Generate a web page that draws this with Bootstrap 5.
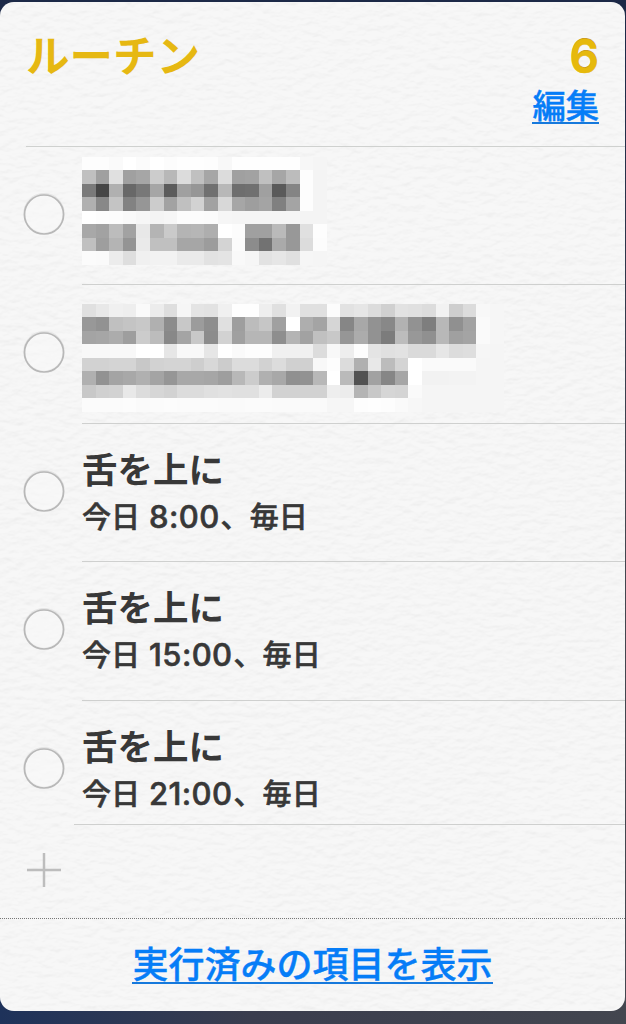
<!DOCTYPE html>
<html lang="ja">
<head>
<meta charset="utf-8">
<meta name="viewport" content="width=device-width, initial-scale=1">
<title>ルーチン</title>
<link href="https://cdn.jsdelivr.net/npm/bootstrap@5.3.0/dist/css/bootstrap.min.css" rel="stylesheet">
<style>
body{height:1024px;overflow:hidden;font-family:Inter,"Noto Sans CJK JP",sans-serif;color:#383838;background:linear-gradient(90deg,#1e325a,#3a3d4e 40%,#43464f)}
.wall{height:1024px;padding:2px 1px 13px 0;background:linear-gradient(#1c2947 0 60px,transparent 500px)}
.paper{height:1009px;border-radius:14px;background:#f6f6f6;isolation:isolate}
.grain{z-index:-1;inset:0}
.head{height:145px;margin-left:26px;padding-right:26px;border-bottom:1px solid #cfd1cf}
.title{font:600 43.5px/60px "Noto Sans CJK JP",sans-serif;color:#e6b812;margin-top:22px}
.count{font-size:46px;font-weight:600;line-height:60px;color:#e6b90c;margin-top:24px;text-shadow:0 -1px 0 #c99a20;-webkit-text-stroke:.5px #e6b90c}
.lnk{color:#067df7;font-weight:500;text-decoration:none;-webkit-text-stroke:.4px #067df7}
.lnk span{display:inline-block;border-bottom:2px solid #1679dc}
.edit{font-size:33.3px;line-height:1;margin-top:2px}
.edit span{height:36px;line-height:37px}
.item{height:138.4px}
.ring{width:82px;flex:none;padding:46px 0 0 23px}
.body-col{border-bottom:1px solid #cfd0cf}
.name{font-size:35.5px;line-height:48px;font-weight:600;padding-top:23px}
.when{font-size:29px;line-height:44px;font-weight:500;-webkit-text-stroke:.6px #383838;padding-top:1px;letter-spacing:.1px}
.when span{font-size:31px;font-weight:500;line-height:1;letter-spacing:.4px;margin:0 1px}
.last{height:124.4px}
.last .body-col{margin-left:-8px;padding-left:8px}
.add{height:94px;padding:27px 0 0 26px;border-bottom:1px dotted #777}
.done{height:92px;padding-top:21px}
.done a{font-size:36px;display:block;line-height:1}
.done span{height:44px;line-height:51px}
</style>
</head>
<body>
<div class="wall">
<main class="paper position-relative overflow-hidden">
<svg class="grain position-absolute w-100 h-100" aria-hidden="true"><filter id="g" x="0" y="0" width="100%" height="100%" color-interpolation-filters="sRGB"><feTurbulence type="fractalNoise" baseFrequency=".08 .15" numOctaves="3" seed="4"/><feDiffuseLighting surfaceScale="1" diffuseConstant="1.12" lighting-color="#fafafa"><feDistantLight azimuth="260" elevation="61"/></feDiffuseLighting></filter><rect width="100%" height="100%" filter="url(#g)" opacity=".13"/></svg>
<header class="head d-flex justify-content-between">
<h1 class="title mb-0">ルーチン</h1>
<div class="text-end"><div class="count">6</div><a class="lnk edit d-block" href="#"><span>編集</span></a></div>
</header>
<section>
<div class="item d-flex"><div class="ring"></div><div class="body-col flex-fill"><svg data-m="0" class="d-block" width="246" height="110" style="margin-top:10px"></svg></div></div>
<div class="item d-flex"><div class="ring"></div><div class="body-col flex-fill"><svg data-m="1" class="d-block" width="422" height="110" style="margin-top:19px"></svg></div></div>
<div class="item d-flex"><div class="ring"></div><div class="body-col flex-fill"><div class="name">舌を上に</div><div class="when">今日 <span>8:00</span>、毎日</div></div></div>
<div class="item d-flex"><div class="ring"></div><div class="body-col flex-fill"><div class="name">舌を上に</div><div class="when">今日 <span>15:00</span>、毎日</div></div></div>
<div class="item last d-flex"><div class="ring"></div><div class="body-col flex-fill"><div class="name">舌を上に</div><div class="when">今日 <span>21:00</span>、毎日</div></div></div>
</section>
<div class="add"><svg class="d-block" width="36" height="36"><path d="M18 1v34M1 18h34" stroke="#bdbdbd" stroke-width="2.5"/></svg></div>
<footer class="done text-center"><a class="lnk" href="#"><span>実行済みの項目を表示</span></a></footer>
</main>
</div>
<script src="https://cdn.jsdelivr.net/npm/bootstrap@5.3.0/dist/js/bootstrap.bundle.min.js"></script>
<script>
// Grey levels of the masked entries, one hex pair per block
const masks=[[
'fd fd fa ff fb ff fc fe fe fd f8 fe fe fe fe fe f7 f5',
'c0 a0 e0 a0 a6 cc b8 dc c0 a6 dc a0 a2 c0 a6 bc fd f4',
'7a 46 b0 68 78 a6 5c a0 96 70 b8 6e 70 a0 5a 84 fd f4',
'b0 88 c4 82 96 cc a2 c0 d2 a2 d8 a6 9e a4 80 a4 fd f4',
'ff fd fc f9 f6 f4 f6 fc fc fb f6 f5 f5 f5 f5 f5 f4 f4',
'a8 a2 bc a2 e8 b4 ca b4 b6 ae ff fc a0 a0 ba 98 e0 fd',
'c0 9e b4 94 ea c0 c0 a6 a6 9c d4 fb 8c 72 aa 98 dc fc',
'fb fa ec de f0 f2 f2 ea ea e2 e4 f9 f6 e2 e6 e0 f6 f5'],[
'e0 e8 f0 ee fa ec de f6 e4 e2 f0 fe fe ee e0 f2 e0 e0 fc e2 e6 dc d0 e2 e0 dc f2 ce dc f8 f6',
'98 92 c0 c4 c8 b0 8c c8 9c 8e e0 9e bc c6 a0 ff ae a4 d6 86 a8 92 88 b2 92 7e b8 90 a2 fa f6',
'a4 a6 ac 9e cc bc 88 a4 c8 8c d2 a0 b6 b6 8e b4 a2 c0 c8 96 ac 92 7c bc 98 90 b8 a0 a4 fa f6',
'f8 f8 f8 f8 ff ff e6 f8 f8 e6 ff fa fd fd f0 f0 f0 dc f8 ee fd e4 e0 e2 da da e6 dc de f6 f5',
'd2 d2 d4 d4 c8 d2 d4 d4 ce d8 cc dc dc d2 dc d0 d0 f8 fd dc b0 e8 bc d4 ff fa fa fa fa f5 f5',
'b0 92 a4 a8 b0 a4 96 a8 a8 a6 9e b8 cc b0 a8 90 92 b8 ff ba 52 a2 86 a6 ff f2 f2 f3 f3 f5 f5',
'c8 d0 d2 e8 dc d6 d2 dc dc e0 e2 e0 e0 ec d2 d2 d2 d2 ee ec b4 c8 d6 d4 fa f5 f5 f5 f5 f5 f5',
'fb fb fb fc fa fb fc fb fb fb fa fa fb fb fa fa fa fa f6 f6 fd fe fd fa f7 f5 f5 f5 f5 f5 f5']];
document.querySelectorAll('svg[data-m]').forEach(s=>{
  s.setAttribute('shape-rendering','crispEdges');
  s.innerHTML=masks[s.dataset.m].map((r,y)=>r.split(' ').map((c,x)=>
    `<rect x="${x*13.6}" y="${y*13.45}" width="13.7" height="13.55" fill="#${c+c+c}"/>`).join('')).join('');
});
document.querySelectorAll('.ring').forEach(e=>e.innerHTML=
  '<svg class="d-block" width="42" height="44"><circle cx="21" cy="20.6" r="19.7" fill="none" stroke="#e5e5e5" stroke-width="2"/><circle cx="21" cy="21.5" r="19.5" fill="#f9f9f9" fill-opacity=".6" stroke="#b8b8b8" stroke-width="1.7"/></svg>');
</script>
</body>
</html>
